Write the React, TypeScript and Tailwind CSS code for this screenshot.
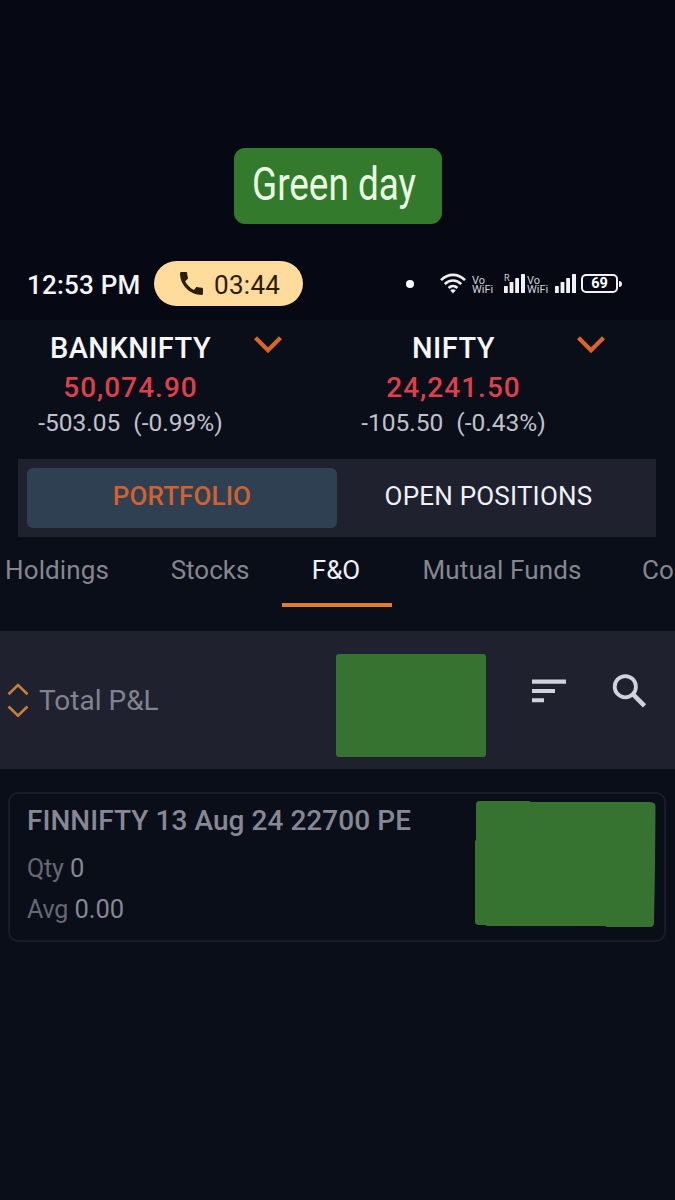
import clsx from 'clsx';

interface IndexQuote {
    name: string;
    price: string;
    change: string;
    percent: string;
}

const quotes: IndexQuote[] = [
    { name: 'BANKNIFTY', price: '50,074.90', change: '-503.05', percent: '(-0.99%)' },
    { name: 'NIFTY', price: '24,241.50', change: '-105.50', percent: '(-0.43%)' },
];

function WifiIcon() {
    return (
        <svg width="26" height="22" viewBox="0 0 26 22" fill="none" stroke="#eef0f6" strokeWidth="2.6">
            <path d="M1 7.2C8 0.1 18 0.1 25 7.2" />
            <path d="M4.8 11.2C9.6 6.3 16.4 6.3 21.2 11.2" />
            <path d="M8.6 15C11.2 12.3 14.8 12.3 17.4 15" />
            <path d="M10.2 17.2C12 15.8 14 15.8 15.8 17.2L13 20.4Z" fill="#eef0f6" stroke="none" />
        </svg>
    );
}

function SignalIcon() {
    return (
        <svg width="21" height="19" viewBox="0 0 21 19" fill="#f1f2f7">
            <rect x="0" y="12" width="3.8" height="7" rx="0.6" />
            <rect x="5.6" y="8" width="3.8" height="11" rx="0.6" />
            <rect x="11.2" y="4" width="3.8" height="15" rx="0.6" />
            <rect x="17" y="0" width="4" height="19" rx="0.6" />
        </svg>
    );
}

function VoWifi() {
    return (
        <div className="w-[22px] pt-[2px] text-[11px] leading-[9px] text-[#d0d2da]">
            <div>Vo</div>
            <div>WiFi</div>
        </div>
    );
}

function StatusBar() {
    return (
        <div className="flex h-[45px] items-center pl-[27px]">
            <span className="w-[127px] whitespace-nowrap pt-[3px] text-[26px] font-medium tracking-[0.2px] text-[#f4f5fa]">12:53 PM</span>
            <div className="flex h-[45px] w-[149px] items-center rounded-full bg-[#ffdc9b] pl-[26px] text-[#2b1d0c]">
                <svg width="23" height="23" viewBox="3 3 18 18" fill="currentColor">
                    <path d="M20.01 15.38c-1.23 0-2.42-.2-3.53-.56-.35-.12-.74-.03-1.01.24l-1.57 1.97c-2.83-1.35-5.48-3.9-6.89-6.83l1.95-1.66c.27-.28.35-.67.24-1.02-.37-1.11-.56-2.3-.56-3.53 0-.54-.45-.99-.99-.99H4.19C3.65 3 3 3.24 3 3.99 3 13.28 10.73 21 20.01 21c.71 0 .99-.63.99-1.18v-3.45c0-.54-.45-.99-.99-.99z" />
                </svg>
                <span className="ml-[11px] pt-[3px] text-[26px] tracking-[0.3px]">03:44</span>
            </div>
            <div className="ml-[103px] size-2 rounded-full bg-white" />
            <div className="ml-[26px]"><WifiIcon /></div>
            <div className="ml-[6px]"><VoWifi /></div>
            <div className="relative ml-[10px]">
                <SignalIcon />
                <span className="absolute left-0 top-0 text-[9px] leading-[9px] text-[#d0d2da]">R</span>
            </div>
            <div className="ml-[2px]"><VoWifi /></div>
            <div className="ml-[6px]"><SignalIcon /></div>
            <div className="ml-[5px] flex items-center">
                <div className="flex h-[19px] w-[37px] items-center justify-center rounded-[5px] border-2 border-[#f1f2f7] pt-[2px] text-[14.5px] font-bold leading-none text-white">69</div>
                <div className="ml-px h-[6px] w-[3px] rounded-r-full bg-[#f1f2f7]" />
            </div>
        </div>
    );
}

function Quote({ name, price, change, percent }: IndexQuote) {
    return (
        <div className="relative flex w-[323px] flex-col items-center pr-[62px] whitespace-nowrap">
            <div className="h-10 text-[29px] font-medium leading-10 tracking-[0.45px] text-[#f6f7fb]">{name}</div>
            <div className="h-10 text-[28px] font-medium leading-10 tracking-[1px] text-[#dd404a]">{price}</div>
            <div className="flex h-[31px] gap-[13px] text-[24.5px] leading-[29px] text-[#bfc1cc]">
                <span>{change}</span>
                <span>{percent}</span>
            </div>
            <svg className="absolute right-[41px] top-[8px]" width="28" height="18" viewBox="0 0 28 18" fill="none" stroke="#d9652b" strokeWidth="4.2">
                <path d="M1.5 1.8L14 14.2L26.5 1.8" />
            </svg>
        </div>
    );
}

function Tab({ label, active, className }: { label: string; active?: boolean; className?: string }) {
    return (
        <div
            className={clsx(
                'h-[70px] shrink-0 whitespace-nowrap text-center text-[26px] leading-[67px]',
                active ? 'border-b-4 border-[#e27d2e] text-[#eff0f6]' : 'text-[#85878f]',
                className
            )}
        >
            {label}
        </div>
    );
}

export default function App() {
    return (
        <div className="flex h-[1200px] w-[675px] flex-col overflow-hidden bg-[#0a0e19] font-[Roboto,sans-serif]">
            {/* Story caption and phone status bar */}
            <div className="h-80 shrink-0 bg-[#060913] pt-[148px]">
                <div className="mx-auto flex h-[76px] w-[208px] items-center justify-center rounded-[11px] bg-[#337a2c]">
                    <span className="-mt-[5px] mr-[8px] inline-block w-[163px] origin-left scale-x-[0.785] whitespace-nowrap text-[47px] leading-none text-[#e9fbe2]">Green day</span>
                </div>
                <div className="mt-[37px]">
                    <StatusBar />
                </div>
            </div>

            {/* Index quotes */}
            <div className="flex h-[139px] shrink-0 pt-2">
                {quotes.map((q) => (
                    <Quote key={q.name} {...q} />
                ))}
            </div>

            {/* Segmented switch */}
            <div className="ml-[18px] flex h-[78px] w-[638px] shrink-0 bg-[#1f212f] p-[9px] text-[26px] leading-[57px]">
                <div className="h-[60px] w-[310px] rounded-md bg-[#2f4052] text-center font-medium tracking-[0.1px] text-[#d1622f]">PORTFOLIO</div>
                <div className="flex-1 pr-[7px] text-center tracking-[0.2px] text-[#f0f1f7]">OPEN POSITIONS</div>
            </div>

            {/* Category tabs */}
            <div className="flex h-[94px] shrink-0 overflow-hidden">
                <Tab label="Holdings" className="w-[114px] tracking-[0.1px]" />
                <Tab label="Stocks" className="ml-[46px] w-[100px]" />
                <Tab label="F&O" active className="ml-[22px] w-[110px] pr-[2px]" />
                <Tab label="Mutual Funds" className="ml-[20px] w-[180px] tracking-[0.1px]" />
                <Tab label="Commodity" className="ml-[50px]" />
            </div>

            {/* Total P&L */}
            <div className="flex h-[138px] shrink-0 items-start bg-[#1f212f]">
                <svg className="ml-[7px] mt-[51px]" width="22" height="36" viewBox="0 0 22 36" fill="none" stroke="#c5803f" strokeWidth="2.6">
                    <path d="M1.5 12.3L11 3L20.5 12.3M1.5 24.5L11 33.8L20.5 24.5" />
                </svg>
                <span className="ml-[10px] mt-[50px] w-[297px] text-[28px] leading-10 text-[#81838f]">Total P&amp;L</span>
                <div className="mt-[23px] h-[103px] w-[150px] rounded-[3px] bg-[#377330]" />
                <svg className="ml-[46px] mt-[48px]" width="34" height="24" viewBox="0 0 34 24" fill="#d0d2dc">
                    <path d="M0 0.5H34V4.8H0ZM0 10H23V14H0ZM0 19.2H12V23.3H0Z" />
                </svg>
                <svg className="ml-[46px] mt-[42px]" width="35" height="35" viewBox="0 0 35 35" fill="none" stroke="#d0d2dc" strokeWidth="3.8">
                    <circle cx="13.3" cy="13.7" r="10.6" />
                    <path d="M20.8 21.2L32.5 32.8" strokeWidth="4.6" />
                </svg>
            </div>

            {/* Position card */}
            <div className="ml-[8px] mt-[23px] flex h-[150px] w-[658px] shrink-0 justify-between rounded-[10px] border-2 border-[#191c27] pl-[17px] text-[25.5px] text-[#868895]">
                <div className="whitespace-nowrap pt-[7px]">
                    <div className="h-10 text-[28px] font-medium leading-10 tracking-[0.05px]">FINNIFTY 13 Aug 24 22700 PE</div>
                    <div className="mt-[7px] h-10 leading-10">
                        <span className="text-[25px] tracking-[-0.2px] text-[#666874]">Qty</span> 0
                    </div>
                    <div className="mt-px h-10 leading-10">
                        <span className="text-[25px] tracking-[-0.2px] text-[#666874]">Avg</span> 0.00
                    </div>
                </div>
                <svg className="mr-[8px] mt-[7px]" width="181" height="127" viewBox="0 0 181 127" fill="#377330">
                    <path d="M4 0H54L56 1H174Q180.500 1 180.500 5L180 65L179 122Q179 126 175 126L132 126L130 125H12L10 124H4Q0 124 0 121V40L1 39V4Q1 0 4 0Z" />
                </svg>
            </div>
        </div>
    );
}
